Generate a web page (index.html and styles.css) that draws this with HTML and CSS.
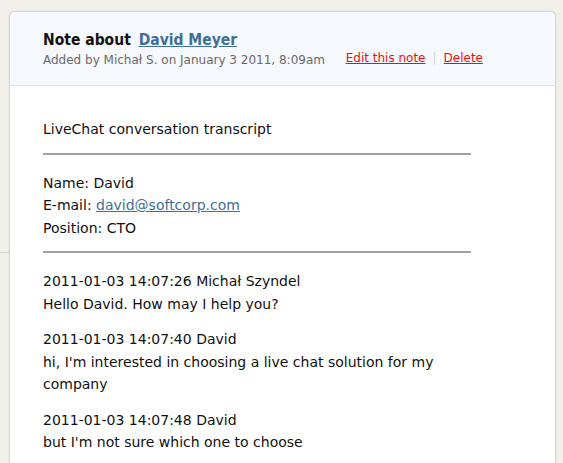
FILE: index.html
```html
<!DOCTYPE html>
<html>
<head>
<meta charset="utf-8">
<link rel="stylesheet" href="styles.css">
</head>
<body>
<div class="page">
  <div class="side"><div class="side-line"></div></div>
  <div class="card">
    <div class="card-head">
      <div class="head-left">
        <h1 class="title">Note about <a href="#" class="person">David Meyer</a></h1>
        <div class="meta">Added by Michał S. on January 3 2011, 8:09am</div>
      </div>
      <div class="actions">
        <a href="#" class="act">Edit this note</a>
        <span class="sep">|</span>
        <a href="#" class="act">Delete</a>
      </div>
    </div>
    <div class="card-body">
      <p class="para">LiveChat conversation transcript</p>
      <hr class="rule">
      <p class="para">Name: David<br>E-mail: <a href="#" class="mail">david@softcorp.com</a><br>Position: CTO</p>
      <hr class="rule">
      <p class="para">2011-01-03 14:07:26 Michał Szyndel<br>Hello David. How may I help you?</p>
      <p class="para">2011-01-03 14:07:40 David<br>hi, I'm interested in choosing a live chat solution for my company</p>
      <p class="para">2011-01-03 14:07:48 David<br>but I'm not sure which one to choose</p>
    </div>
  </div>
</div>
</body>
</html>
```
FILE: styles.css
```css
html, body {
  margin: 0;
  padding: 0;
  background: #f0efea;
  font-family: "DejaVu Sans", "Noto Sans", sans-serif;
  color: #111;
  overflow: hidden;
}
.page {
  display: flex;
  padding-top: 11px;
  height: 463px;
  box-sizing: border-box;
}
.side {
  width: 9px;
  flex: none;
  padding-top: 241px;
}
.side-line {
  height: 1px;
  background: #d6d5d0;
}
.card {
  width: 545px;
  flex: none;
  background: #fff;
  border: 1px solid #d9dadd;
  border-bottom: none;
  border-radius: 6px 6px 0 0;
  box-shadow: 0 0 2px rgba(0,0,0,0.12);
  overflow: hidden;
}
.card-head {
  background: #f5f8fd;
  border-bottom: 1px solid #dde2ea;
  height: 74px;
  box-sizing: border-box;
  padding: 19px 72px 0 33px;
  display: flex;
  justify-content: space-between;
  align-items: flex-start;
}
.title {
  margin: 0;
  font-family: "DejaVu Sans Condensed", "DejaVu Sans", sans-serif;
  font-size: 15.5px;
  font-weight: bold;
  line-height: 19px;
}
.person {
  color: #3f6f95;
  text-decoration: underline;
  margin-left: 3px;
}
.meta {
  font-size: 12px;
  color: #6a6a6a;
  line-height: 16px;
  margin-top: 2px;
}
.actions {
  padding-top: 19px;
  font-size: 12px;
  line-height: 16px;
  display: flex;
  gap: 7px;
}
.act {
  color: #f20d0d;
  text-decoration: underline;
}
.sep {
  color: #d2d2d2;
}
.card-body {
  padding: 32px 84px 0 33px;
  font-size: 14px;
  line-height: 22.5px;
}
.para {
  margin: 0 0 13px 0;
}
.rule {
  border: none;
  border-top: 2px solid #a0a0a0;
  margin: -1px 0 17px 0;
  height: 0;
}
.mail {
  color: #3f6f95;
  text-decoration: underline;
}
```
